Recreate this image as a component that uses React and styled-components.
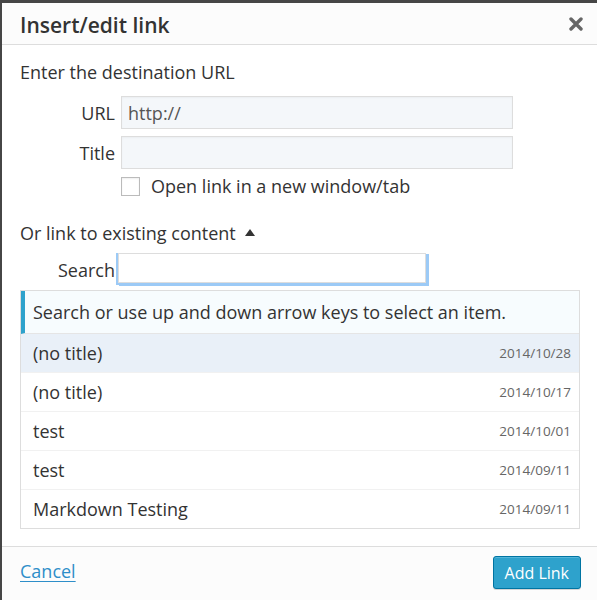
import React from "react";
import styled, { createGlobalStyle } from "styled-components";

const GlobalStyle = createGlobalStyle`
  html, body {
    margin: 0;
    padding: 0;
    background: #464646;
    font-family: "Open Sans", "Liberation Sans", sans-serif;
    color: #333;
  }
`;

const Dialog = styled.div`
  margin: 3px 0 0 2px;
  height: 597px;
  background: #fff;
  display: flex;
  flex-direction: column;
  overflow: hidden;
`;

const Header = styled.div`
  height: 41px;
  display: flex;
  align-items: center;
  justify-content: space-between;
  padding: 0 13px 0 18px;
  background: #fcfcfc;
  border-bottom: 1px solid #dddddd;
`;

const Heading = styled.h1`
  margin: 0;
  font-size: 21px;
  line-height: 28px;
  font-weight: 600;
  color: #333;
  padding-top: 2px;
`;

const CloseButton = styled.button`
  border: 0;
  background: none;
  padding: 0;
  width: 16px;
  height: 16px;
  display: flex;
  align-items: center;
  justify-content: center;
  cursor: pointer;
`;

const Body = styled.div`
  flex: 1;
  padding: 15px 16px 0 18px;
  font-size: 18px;
`;

const Intro = styled.p`
  margin: 0 0 12px;
  line-height: 24px;
`;

const FieldRow = styled.div`
  display: flex;
  align-items: center;
  gap: ${({ gap }) => gap || 6}px;
  margin-bottom: ${({ spacing }) => spacing ?? 7}px;
`;

const Label = styled.label`
  width: ${({ width }) => width || 95}px;
  text-align: right;
  line-height: 20px;
  padding-top: ${({ drop }) => drop || 0}px;
`;

const TextInput = styled.input`
  box-sizing: border-box;
  width: ${({ width }) => width}px;
  height: ${({ height }) => height || 33}px;
  border: 1px solid #dddddd;
  background: ${({ focused }) => (focused ? "#fff" : "#f4f7fa")};
  font-family: inherit;
  font-size: 18px;
  color: #555;
  padding: 0 6px;
  outline: none;
  box-shadow: ${({ focused }) =>
    focused
      ? "2px 2px 0 1px #9ccaf6, -1px 1px 0 1px #9ccaf6"
      : "inset 0 1px 2px rgba(0,0,0,0.04)"};
`;

const CheckRow = styled.div`
  display: flex;
  align-items: center;
  gap: 11px;
  height: 20px;
  line-height: 20px;
  padding-left: 101px;
  margin-bottom: 25px;
`;

const Checkbox = styled.span`
  box-sizing: border-box;
  width: 19px;
  height: 19px;
  border: 1px solid #bbbbbb;
  background: #fff;
  box-shadow: inset 0 1px 2px rgba(0, 0, 0, 0.07);
`;

const Toggle = styled.div`
  display: flex;
  align-items: center;
  gap: 9px;
  line-height: 24px;
  margin-bottom: 8px;
`;

const Arrow = styled.span`
  width: 0;
  height: 0;
  border-left: 5px solid transparent;
  border-right: 5px solid transparent;
  border-bottom: 7px solid #333;
  margin-top: -2px;
`;

const Results = styled.div`
  margin-top: 7px;
  border: 1px solid #dddddd;
  width: 560px;
  box-sizing: border-box;
`;

const Notice = styled.div`
  height: 42px;
  display: flex;
  align-items: center;
  padding-left: 8px;
  background: #f7fcfe;
  border-left: 4px solid #2ea2cc;
  border-bottom: 1px solid #e5e5e5;
`;

const ResultRow = styled.div`
  height: 38px;
  display: flex;
  align-items: center;
  justify-content: space-between;
  padding: 0 8px 0 12px;
  background: ${({ selected }) => (selected ? "#e9f0f8" : "#fff")};
  border-bottom: 1px solid #f1f1f1;
  &:last-child {
    border-bottom: 0;
  }
`;

const ResultDate = styled.span`
  font-size: 13.5px;
  color: #666;
`;

const Footer = styled.div`
  height: 54px;
  box-sizing: border-box;
  display: flex;
  align-items: flex-start;
  justify-content: space-between;
  padding: 9px 16px 0 18px;
  background: #fcfcfc;
  border-top: 1px solid #dddddd;
`;

const CancelLink = styled.a`
  font-size: 18px;
  line-height: 30px;
  color: #2e8ec9;
  text-decoration: underline;
  text-underline-offset: 3px;
  cursor: pointer;
`;

const PrimaryButton = styled.button`
  height: 33px;
  padding: 0 11px;
  border: 1px solid #0074a2;
  border-radius: 3px;
  background: #2ea2cc;
  color: #fff;
  font-family: inherit;
  font-size: 16px;
  box-shadow: inset 0 1px 0 rgba(120, 200, 230, 0.5),
    0 1px 0 rgba(0, 0, 0, 0.15);
  cursor: pointer;
`;

const results = [
  { title: "(no title)", date: "2014/10/28" },
  { title: "(no title)", date: "2014/10/17" },
  { title: "test", date: "2014/10/01" },
  { title: "test", date: "2014/09/11" },
  { title: "Markdown Testing", date: "2014/09/11" },
];

const App = () => {
  return (
    <>
      <GlobalStyle />
      <Dialog>
        <Header>
          <Heading>Insert/edit link</Heading>
          <CloseButton aria-label="Close">
            <svg width="14" height="14" viewBox="0 0 14 14">
              <path
                d="M2 2 L12 12 M12 2 L2 12"
                stroke="#666"
                strokeWidth="3.4"
                strokeLinecap="round"
              />
            </svg>
          </CloseButton>
        </Header>
        <Body>
          <Intro>Enter the destination URL</Intro>
          <FieldRow>
            <Label>URL</Label>
            <TextInput width={392} defaultValue="http://" />
          </FieldRow>
          <FieldRow>
            <Label>Title</Label>
            <TextInput width={392} />
          </FieldRow>
          <CheckRow>
            <Checkbox />
            <span>Open link in a new window/tab</span>
          </CheckRow>
          <Toggle>
            <span>Or link to existing content</span>
            <Arrow />
          </Toggle>
          <FieldRow gap={3} spacing={0}>
            <Label drop={3}>Search</Label>
            <TextInput width={308} height={30} focused />
          </FieldRow>
          <Results>
            <Notice>Search or use up and down arrow keys to select an item.</Notice>
            {results.map((item, i) => (
              <ResultRow key={i} selected={i === 0}>
                <span>{item.title}</span>
                <ResultDate>{item.date}</ResultDate>
              </ResultRow>
            ))}
          </Results>
        </Body>
        <Footer>
          <CancelLink>Cancel</CancelLink>
          <PrimaryButton>Add Link</PrimaryButton>
        </Footer>
      </Dialog>
    </>
  );
};

export default App;
